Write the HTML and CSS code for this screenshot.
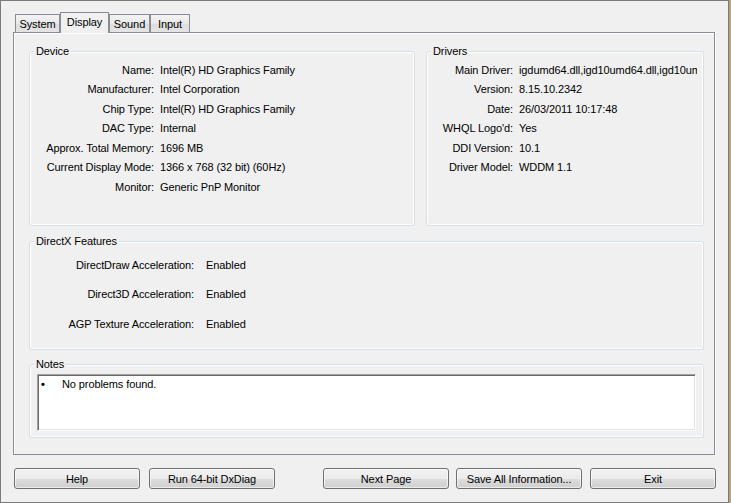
FILE: index.html
```html
<!DOCTYPE html>
<html lang="en">
<head>
  <meta charset="UTF-8" />
  <title>DirectX Diagnostic Tool</title>
  <link rel="stylesheet" href="styles.css">
</head>
<body>
  <div class="dialog">
    <div class="tabs">
      <div class="tab tab-system">System</div>
      <div class="tab tab-display active">Display</div>
      <div class="tab tab-sound">Sound</div>
      <div class="tab tab-input">Input</div>
    </div>

    <div class="panel">
      <div class="top-row">
        <fieldset class="group device">
          <legend>Device</legend>
          <div class="props">
            <span class="k">Name:</span><span class="v">Intel(R) HD Graphics Family</span>
            <span class="k">Manufacturer:</span><span class="v">Intel Corporation</span>
            <span class="k">Chip Type:</span><span class="v">Intel(R) HD Graphics Family</span>
            <span class="k">DAC Type:</span><span class="v">Internal</span>
            <span class="k">Approx. Total Memory:</span><span class="v">1696 MB</span>
            <span class="k">Current Display Mode:</span><span class="v">1366 x 768 (32 bit) (60Hz)</span>
            <span class="k">Monitor:</span><span class="v">Generic PnP Monitor</span>
          </div>
        </fieldset>

        <fieldset class="group drivers">
          <legend>Drivers</legend>
          <div class="props">
            <span class="k">Main Driver:</span><span class="v">igdumd64.dll,igd10umd64.dll,igd10umd64.dll</span>
            <span class="k">Version:</span><span class="v">8.15.10.2342</span>
            <span class="k">Date:</span><span class="v">26/03/2011 10:17:48</span>
            <span class="k">WHQL Logo'd:</span><span class="v">Yes</span>
            <span class="k">DDI Version:</span><span class="v">10.1</span>
            <span class="k">Driver Model:</span><span class="v">WDDM 1.1</span>
          </div>
        </fieldset>
      </div>

      <fieldset class="group dx">
        <legend>DirectX Features</legend>
        <div class="props">
          <span class="k">DirectDraw Acceleration:</span><span class="v">Enabled</span>
          <span class="k">Direct3D Acceleration:</span><span class="v">Enabled</span>
          <span class="k">AGP Texture Acceleration:</span><span class="v">Enabled</span>
        </div>
      </fieldset>

      <fieldset class="group notes">
        <legend>Notes</legend>
        <div class="notes-box">
          <div class="note"><span class="bullet">&bull;</span>No problems found.</div>
        </div>
      </fieldset>
    </div>

    <div class="buttons">
      <button class="btn btn-help">Help</button>
      <button class="btn btn-run">Run 64-bit DxDiag</button>
      <button class="btn btn-next">Next Page</button>
      <button class="btn btn-save">Save All Information...</button>
      <button class="btn btn-exit">Exit</button>
    </div>
  </div>
</body>
</html>
```

FILE: styles.css
```css
html, body {
  margin: 0; padding: 0; height: 100%; overflow: hidden;
  background: #b8a282;
}
body {
  font-family: "Liberation Sans", Arial, sans-serif;
  font-size: 11px;
  letter-spacing: -0.1px;
  color: #000;
}
.dialog {
  width: 729px;
  height: 503px;
  box-sizing: border-box;
  border: 1px solid #7b7b7b;
  background: #f0f0f0;
  padding: 11px 0 0 12px;
}

/* tab strip */
.tabs {
  display: flex;
  align-items: flex-end;
  height: 20px;
  margin-left: 2px;
  position: relative;
  z-index: 1;
}
.tab {
  height: 18px;
  box-sizing: border-box;
  border: 1px solid #898c95;
  border-bottom: none;
  background: linear-gradient(#f4f4f4, #e8e8e8 50%, #dedede 51%, #e4e4e4);
  text-align: center;
  line-height: 18px;
}
.tab-system { width: 45px; }
.tab-display { width: 49px; }
.tab-sound { width: 41px; }
.tab-input { width: 40px; }
.tab.active {
  height: 21px;
  margin-bottom: -1px;
  background: #f0f0f0;
  line-height: 19px;
}

/* tab page */
.panel {
  width: 702px;
  height: 423px;
  box-sizing: border-box;
  border: 1px solid #898c95;
  box-shadow: inset 1px 1px 0 #fff, 1px 0 0 #fff;
  padding: 11px 10px 0 15px;
}
.top-row {
  display: flex;
  gap: 11px;
}
.group {
  margin: 0;
  padding: 0;
  min-width: 0;
  border: 1px solid #d5dfe5;
  border-radius: 3px;
  box-shadow: inset 0 0 0 1px #fff;
}
.group legend {
  padding: 0 2px;
  margin-left: 4px;
  line-height: 15px;
  background: #f0f0f0;
}
.device { width: 386px; box-sizing: border-box; }
.drivers { width: 278px; box-sizing: border-box; }

.props {
  display: grid;
  grid-auto-rows: 19.5px;
  align-items: center;
  column-gap: 6px;
  box-sizing: border-box;
  padding-top: 1px;
  height: 166px;
}
.props .k {
  text-align: right;
  white-space: nowrap;
}
.props .v {
  white-space: nowrap;
  overflow: hidden;
}
.device .props { grid-template-columns: 124px 1fr; }
.drivers .props {
  grid-template-columns: 86px 1fr;
  padding-right: 6px;
}

.dx { margin-top: 8px; }
.dx .props {
  grid-template-columns: 164px 1fr;
  grid-auto-rows: 29.5px;
  column-gap: 12px;
  height: 100px;
}

.notes { margin-top: 7px; }
.notes-box {
  margin: 2px 7px 6px 7px;
  height: 57px;
  box-sizing: border-box;
  background: #fff;
  border-top: 1px solid #a0a0a0;
  border-left: 1px solid #a0a0a0;
  border-right: 1px solid #fff;
  border-bottom: 1px solid #fff;
  box-shadow: inset 1px 1px 0 #696969, inset -1px -1px 0 #e3e3e3;
}
.note {
  display: flex;
  padding: 2px 0 0 3px;
  line-height: 14px;
}
.bullet {
  width: 21px;
  flex-shrink: 0;
  font-weight: bold;
}

/* bottom buttons */
.buttons {
  display: flex;
  gap: 8px;
  margin-top: 13px;
  padding-left: 1px;
}
.btn {
  width: 126px;
  height: 21px;
  margin: 0;
  padding: 0;
  box-sizing: border-box;
  border: 1px solid #707070;
  border-radius: 3px;
  background: linear-gradient(#f2f2f2, #ebebeb 50%, #dddddd 51%, #cfcfcf);
  box-shadow: inset 0 0 0 1px rgba(255, 255, 255, 0.6);
  font: inherit;
  letter-spacing: inherit;
  color: #000;
  text-align: center;
}
.btn-run { margin-left: 1px; }
.btn-next { margin-left: 40px; }
.btn-save { margin-left: -1px; }
```
